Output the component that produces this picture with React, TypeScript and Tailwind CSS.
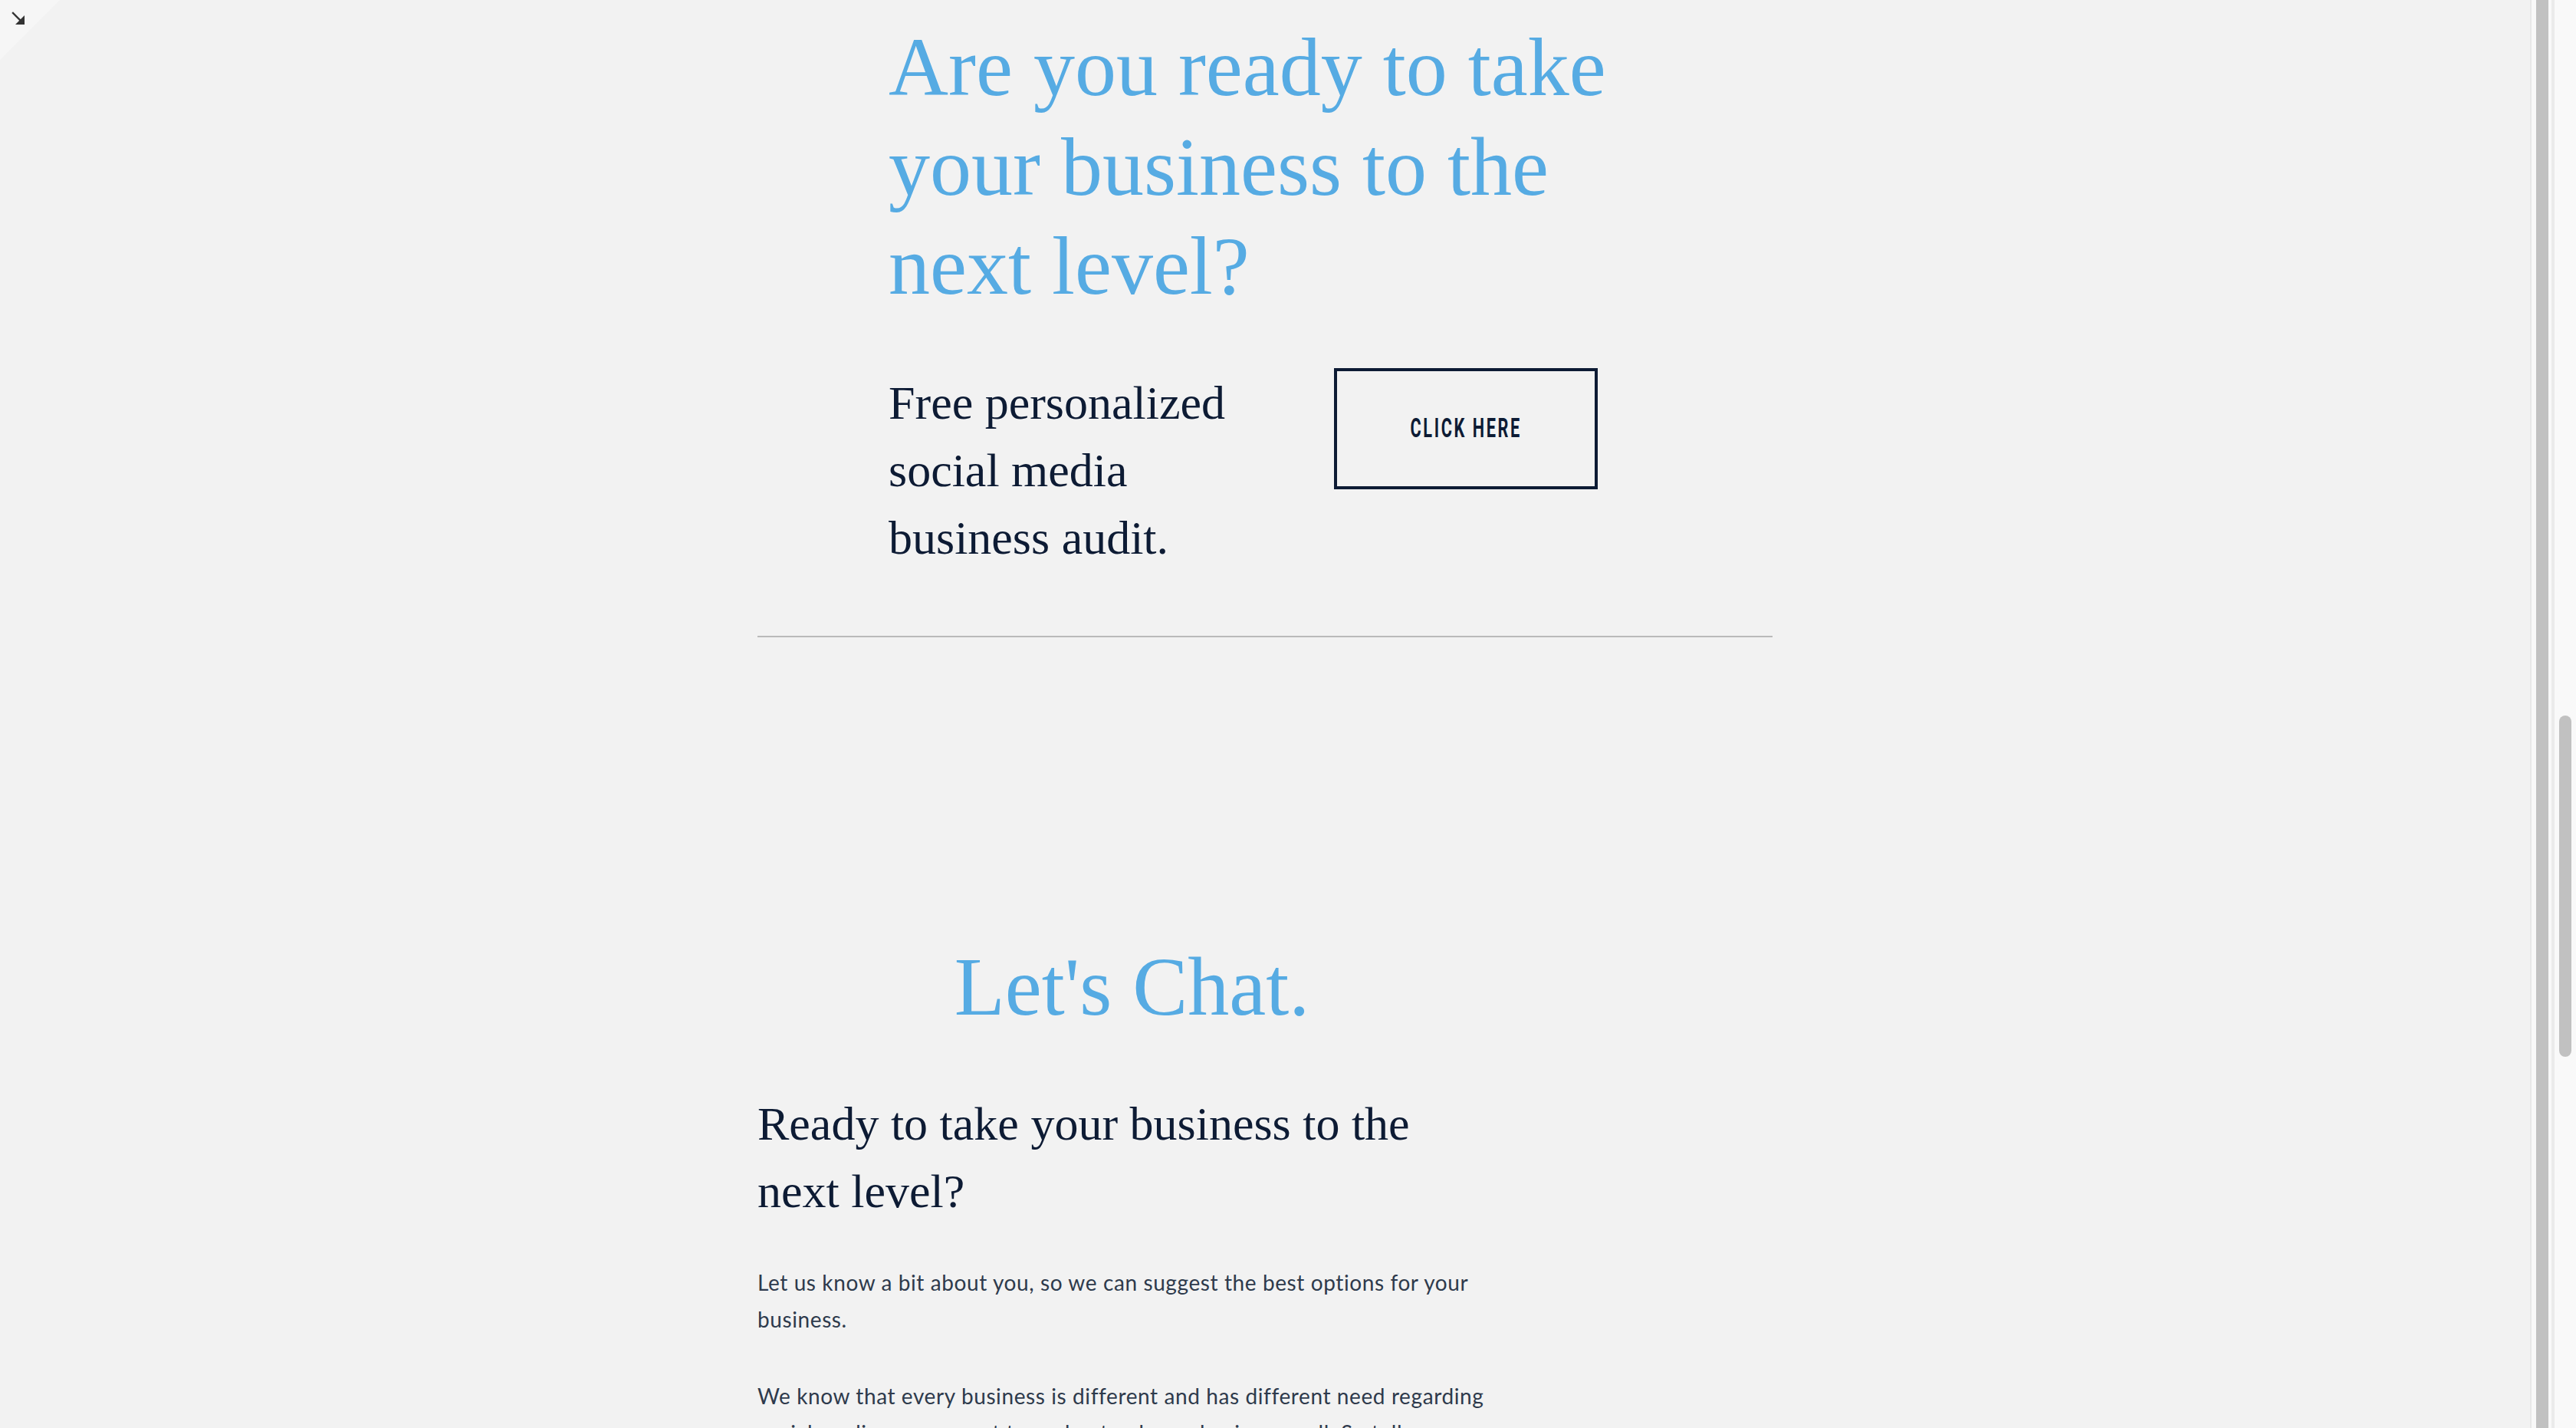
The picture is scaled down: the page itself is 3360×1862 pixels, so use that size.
import React from "react";

function CornerFold() {
  return (
    <div className="absolute left-0 top-0 h-[78px] w-[78px]">
      <svg width="78" height="78" viewBox="0 0 78 78" className="block">
        <polygon points="0,0 78,0 0,78" fill="#f6f6f6" />
        <line x1="17" y1="17" x2="28" y2="28" stroke="#333333" strokeWidth="2.4" strokeLinecap="square" />
        <polygon points="32,20 32,32 20,32" fill="#333333" />
      </svg>
    </div>
  );
}

function InnerScrollbar() {
  return (
    <div className="flex h-full w-[28px] border-l-2 border-[#e8e8e8] bg-[#f8f8f8] pl-[6px]">
      <div className="h-full w-[16px] bg-[#c1c1c1]" />
    </div>
  );
}

function OuterScrollbar() {
  return (
    <div className="flex h-full w-[32px] flex-col border-l-4 border-[#ebebeb] bg-[#f9f9f9] pl-[6px] pt-[933px]">
      <div className="h-[445px] w-[16px] rounded-full bg-[#c1c1c1]" />
    </div>
  );
}

export default function App() {
  const serif = "font-['Liberation_Serif','Times_New_Roman',serif]";
  return (
    <div className="flex h-screen w-full overflow-hidden bg-[#f2f2f2]">
      <main className="relative flex-1 overflow-hidden">
        <CornerFold />
        <div className="mx-auto flex w-[1324px] flex-col pt-[23px]">
          <section className="pl-[171px]">
            <h1 className={`${serif} w-[960px] text-[108px] font-normal leading-[1.2] text-[#56abe3]`}>
              Are you ready to take your business to the next level?
            </h1>
            <div className="mt-[69px] flex items-start">
              <p className={`${serif} w-[500px] text-[62px] leading-[88px] text-[#0d1b34]`}>
                Free personalized social media business audit.
              </p>
              <a
                href="#"
                className="ml-[81px] mt-[-1px] flex h-[158px] w-[344px] items-center justify-center border-4 border-[#0d1b34] text-[#0d1b34]"
              >
                <span className="inline-block scale-x-[0.62] whitespace-nowrap font-['Roboto',sans-serif] text-[35px] font-bold uppercase leading-none tracking-[0.12em]">
                  Click Here
                </span>
              </a>
            </div>
          </section>

          <div className="mt-[84px] h-[2px] w-full bg-[#bababa]" />

          <section className="mt-[391px] flex w-[977px] flex-col">
            <h2 className={`${serif} text-center text-[108px] font-normal leading-[1.2] text-[#56abe3]`}>
              Let's Chat.
            </h2>
            <h3 className={`${serif} mt-[70px] w-[940px] text-[62px] font-normal leading-[88px] text-[#0d1b34]`}>
              Ready to take your business to the next level?
            </h3>
            <div className="mt-[51px] font-['Lato','Open_Sans',sans-serif] text-[28px] leading-[48px] tracking-[0.6px] text-[#2e3a4c]">
              <p className="whitespace-nowrap">
                Let us know a bit about you, so we can suggest the best options for your
                <br />
                business.
              </p>
              <p className="mt-[52px] whitespace-nowrap">
                We know that every business is different and has different need regarding
                <br />
                social media, so we want to understand your business well. So tell us
              </p>
            </div>
          </section>
        </div>
      </main>
      <InnerScrollbar />
      <OuterScrollbar />
    </div>
  );
}
